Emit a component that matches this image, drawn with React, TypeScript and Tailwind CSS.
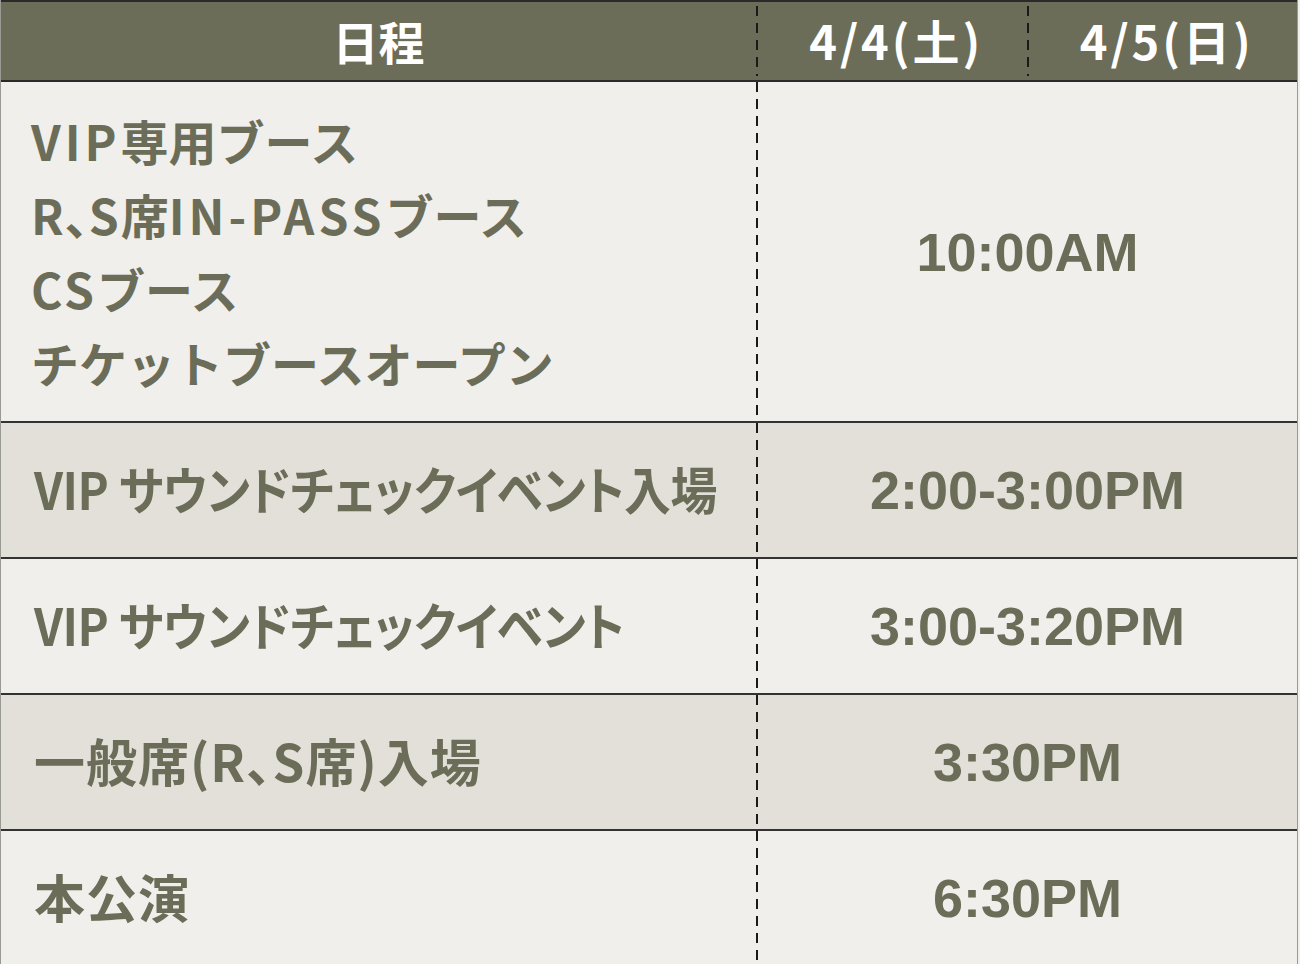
import React from "react";

const jp = "font-['Noto_Sans_CJK_JP',sans-serif]";
const dash =
  "w-[2px] shrink-0 bg-[repeating-linear-gradient(to_bottom,#1a1a1a_0_10px,transparent_10px_17px)]";
const time =
  "flex-1 flex items-center justify-center font-['Liberation_Sans',Arial,sans-serif] font-bold text-[54px] leading-none text-[#6b6d58]";
const palt = "[font-feature-settings:'palt']";

function Row({
  left,
  right,
  alt,
  last,
  squeeze,
}: {
  left: React.ReactNode;
  right: string;
  alt?: boolean;
  last?: boolean;
  squeeze?: boolean;
}) {
  return (
    <div
      className={`flex ${alt ? "bg-[#e2e0d9]" : "bg-[#f0efeb]"} ${
        last ? "h-[134px]" : "h-[136px] border-b-2 border-[#333]"
      }`}
    >
      <div
        className={`w-[755px] shrink-0 flex items-center pl-[33px] pb-[4px] ${jp} font-bold text-[51px] leading-none text-[#6b6d58] ${palt} whitespace-nowrap`}
      >
        <span
          className={
            squeeze
              ? "inline-block origin-left scale-x-[0.92] tracking-[-0.5px]"
              : "inline-block tracking-[1px]"
          }
        >
          {left}
        </span>
      </div>
      <div className={dash} />
      <div className={time}>{right}</div>
    </div>
  );
}

export default function App() {
  return (
    <div className="w-[1300px] h-[964px] overflow-hidden bg-[#f0efeb]">
      <div className="w-[1298px] border-l border-r border-[#9a9a94]">
        {/* header */}
        <div className="flex h-[82px] bg-[#6b6d58] border-t-2 border-b-2 border-[#2a2a2a]">
          <div
            className={`w-[755px] shrink-0 flex items-center justify-center pb-[1px] ${jp} font-bold text-[46px] text-white`}
          >
            日程
          </div>
          <div className={`${dash} my-[4px]`} />
          <div
            className={`flex-1 flex items-center justify-center pb-[1px] pl-[8px] ${jp} font-bold text-[47px] text-white tracking-[3px]`}
          >
            4/4(土)
          </div>
          <div className={`${dash} my-[4px]`} />
          <div
            className={`flex-1 flex items-center justify-center pb-[1px] pl-[8px] ${jp} font-bold text-[47px] text-white tracking-[3px]`}
          >
            4/5(日)
          </div>
        </div>

        {/* row 1 */}
        <div className="flex h-[341px] bg-[#f0efeb] border-b-2 border-[#333]">
          <div
            className={`w-[755px] shrink-0 flex flex-col justify-center pl-[30px] pb-[2px] ${jp} font-bold text-[48px] leading-[74px] text-[#6b6d58] whitespace-nowrap`}
          >
            <div>
              <span className="tracking-[4px]">VIP</span>専用ブース
            </div>
            <div>
              <span className="tracking-[1px]">R</span>
              <span className={palt}>、</span>
              <span className="tracking-[2px]">S</span>席
              <span className="tracking-[4px]">IN-PASS</span>ブース
            </div>
            <div>
              <span className="tracking-[3px]">CS</span>ブース
            </div>
            <div>チケットブースオープン</div>
          </div>
          <div className={dash} />
          <div className={time}>10:00AM</div>
        </div>

        <Row left="VIP サウンドチェックイベント入場" right="2:00-3:00PM" alt squeeze />
        <Row left="VIP サウンドチェックイベント" right="3:00-3:20PM" squeeze />
        <Row left="一般席(R、S席)入場" right="3:30PM" alt />
        <Row left="本公演" right="6:30PM" last />
      </div>
    </div>
  );
}
